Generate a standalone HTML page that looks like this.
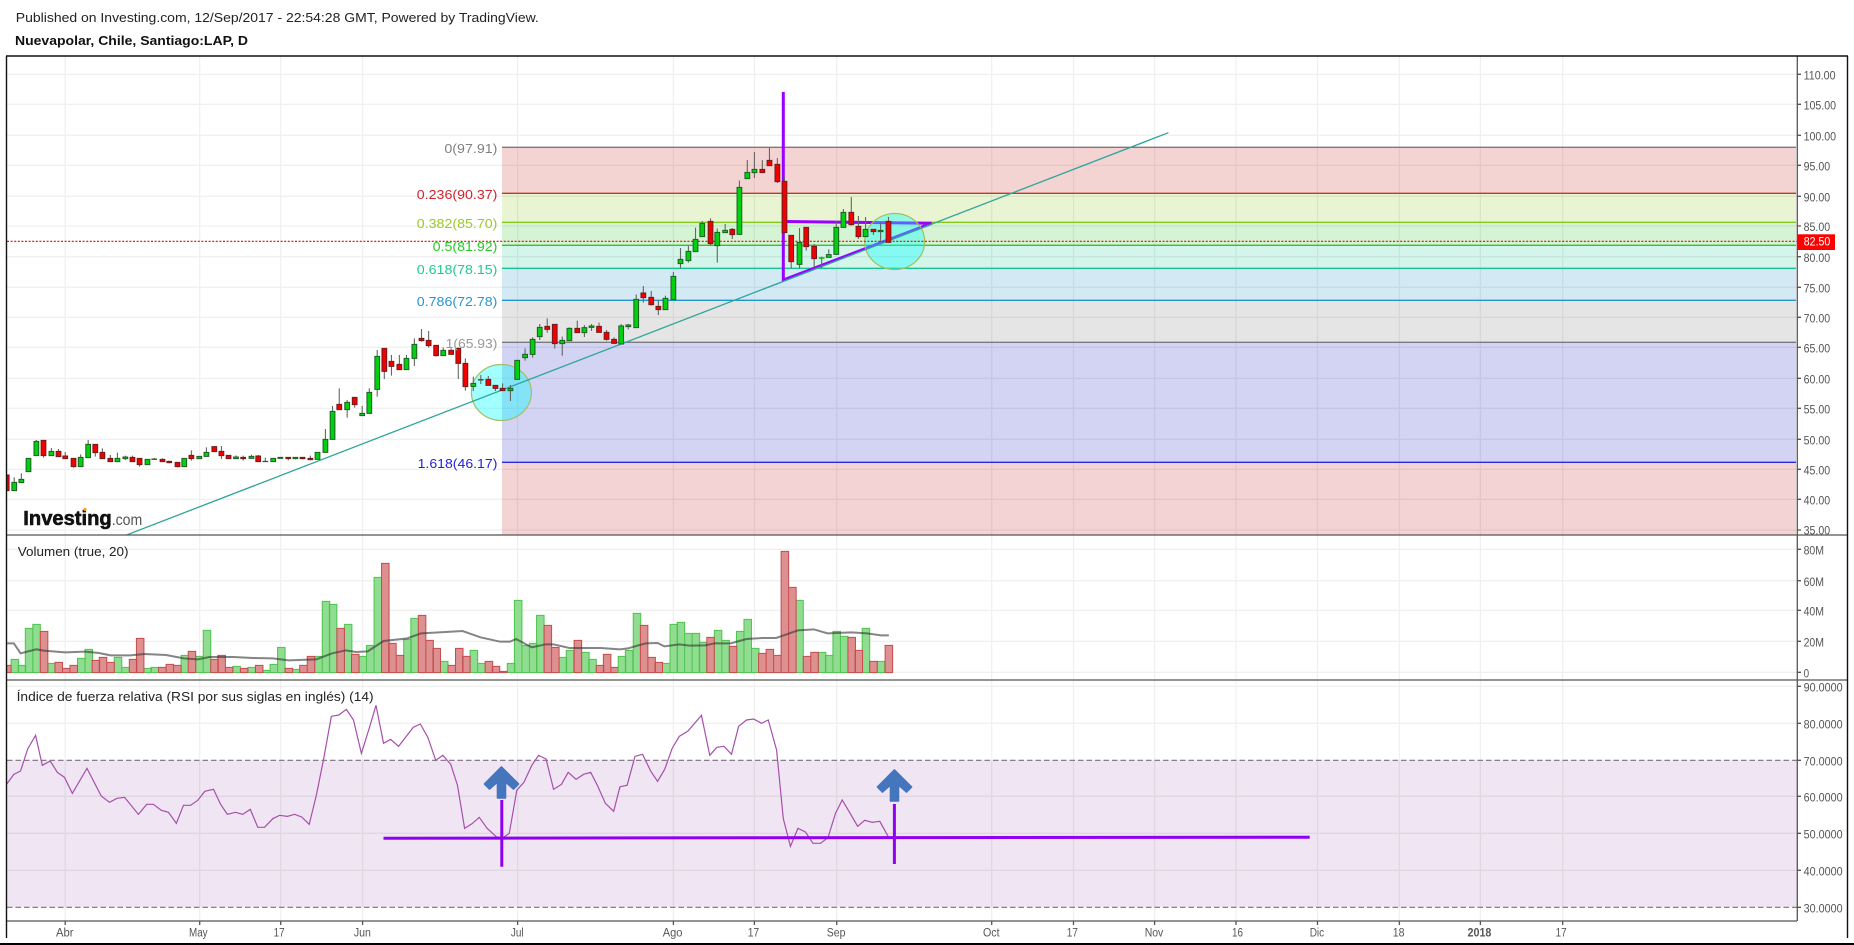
<!DOCTYPE html>
<html lang="es">
<head>
<meta charset="utf-8">
<title>Nuevapolar, Chile, Santiago:LAP, D</title>
<style>
html,body{margin:0;padding:0;background:#fff;width:1854px;height:945px;overflow:hidden}
svg{display:block;position:absolute;left:0;top:0}
text{font-family:"Liberation Sans",Arial,sans-serif}
.ax{font-size:11.5px;fill:#555}
.fib{font-size:12.8px}
.ns *{vector-effect:non-scaling-stroke}
</style>
</head>
<body>
<svg width="1854" height="945" viewBox="0 0 1854 945" xmlns="http://www.w3.org/2000/svg">
<rect width="1854" height="945" fill="#fff"/>

<!-- RSI band -->
<rect x="7" y="760.3" width="1790" height="147" fill="#f0e5f2"/>

<!-- Fib fills -->
<rect x="502" y="147.3" width="1294" height="46" fill="#f3d4d3"/>
<rect x="502" y="193.3" width="1294" height="29" fill="#e9f4d3"/>
<rect x="502" y="222.3" width="1294" height="23" fill="#d4f4d4"/>
<rect x="502" y="245.3" width="1294" height="23" fill="#d3f5ea"/>
<rect x="502" y="268.3" width="1294" height="32" fill="#d3e9f4"/>
<rect x="502" y="300.3" width="1294" height="42" fill="#e5e5e5"/>
<rect x="502" y="342.3" width="1294" height="120" fill="#d3d3f3"/>
<rect x="502" y="462.3" width="1294" height="73" fill="#f3d3d3"/>

<!-- Grid -->
<path fill="none" stroke="#000" stroke-opacity=".06" stroke-width="1.3" d="M7 74.3H1797M7 104.3H1797M7 135.3H1797M7 165.3H1797M7 196.3H1797M7 226H1797M7 256.7H1797M7 287.3H1797M7 317.3H1797M7 347.3H1797M7 378.3H1797M7 408.3H1797M7 439.3H1797M7 469.3H1797M7 499.3H1797M7 530H1797M7 549.3H1797M7 580.7H1797M7 610.3H1797M7 641.3H1797M7 672.3H1797M7 686.3H1797M7 723.3H1797M7 796.3H1797M7 833.3H1797M7 870.3H1797M65.2 56V921M199.7 56V921M280.7 56V921M362.6 56V921M517.6 56V921M673.4 56V921M754.4 56V921M836.7 56V921M991.7 56V921M1073.5 56V921M1154.6 56V921M1236 56V921M1317.5 56V921M1399.4 56V921M1480.4 56V921M1562.7 56V921"/>

<!-- Fib lines -->
<g stroke-width="1.3" fill="none">
<path d="M502 147.3H1796" stroke="#7f7777"/>
<path d="M502 193.3H1796" stroke="#c0392b"/>
<path d="M502 222.3H1796" stroke="#85c81f"/>
<path d="M502 245.3H1796" stroke="#2ec62e"/>
<path d="M502 268.3H1796" stroke="#17c48f"/>
<path d="M502 300.3H1796" stroke="#2196cb"/>
<path d="M502 342.3H1796" stroke="#7a7a82"/>
<path d="M502 462.3H1796" stroke="#2a2adf"/>
</g>

<!-- Purple triangle -->
<path d="M783.3 92V280L931.6 223.3L785 221.5" fill="none" stroke="#9900ff" stroke-width="3"/>

<!-- Circles -->
<ellipse cx="501.4" cy="392.5" rx="30" ry="28" fill="#00ffff" fill-opacity=".37" stroke="#a3bf62" stroke-width="1.2"/>
<ellipse cx="894.7" cy="241.5" rx="30" ry="28" fill="#00ffff" fill-opacity=".37" stroke="#a3bf62" stroke-width="1.2"/>

<!-- Trend line -->
<path d="M126.5 535L1168.4 132.7" stroke="#2fa59a" stroke-width="1.3" fill="none"/>

<!-- Last price line -->
<path d="M7 241.3H1797" stroke="#f00000" stroke-width="1.2" stroke-dasharray="2 1.6" fill="none"/>

<!-- Candles: first segment -->
<g class="ns" transform="translate(0,320) scale(.3954,.33333)">
<path fill="none" stroke="#666" stroke-width="1.1" d="M36 472V512M54 460V488M92 360V407M110 361V413M130 384V407M148 387V410M165 396V416M186 415V443M204 403V440M223 360V413M241 373V410M259 385V416M279 405V425M297 398V425M317 407V420M335 407V425M353 415V440M373 418V434M390 414V420M411 415V425M428 422V430M449 427V442M466 415V440M484 391V422M504 409V416M522 382V409M542 380V395M560 378V417M578 406V416M597 406V416M615 407V422M636 404V415M653 405V425M671 413V425M691 415V425M709 412V415M729 412V421M747 412V418M765 412V418M785 407V421M803 397V418M823 327V397M841 258V358M858 205V269M878 240V293M897 232V263M916 258V287M934 205V280M954 90V230M972 85V177M990 105V167M1010 105V149M1028 105V149M1048 55V138M1066 27V65M1084 33V83M1103 76V110M1121 82V107M1141 85V103M1159 82V177M1177 115V212M1197 170V213M1216 165V192M1235 168V196M1253 196V213M1271 190V212M1291 195V243M1308 121V178M1328 85V122M1347 52V113M1365 12V60M1384 -5V38M1403 13V86M1422 50V107M1440 22V62M1460 2V38M1478 15V51M1496 12V33M1515 8V37M1534 30V62M1553 52V70"/>
<path fill="#00d010" stroke="#1d5f22" stroke-width="1" d="M30 487h12V512h-12zM48 478h12V488h-12zM66 415h12V455h-12zM86 364h12V407h-12zM124 394h12V407h-12zM198 412h12V440h-12zM217 373h12V413h-12zM291 415h12V425h-12zM311 411h12V416h-12zM367 418h12V434h-12zM384 417h12V418h-12zM460 415h12V440h-12zM498 409h12V416h-12zM516 397h12V409h-12zM591 411h12V416h-12zM630 409h12V415h-12zM665 424h12V425h-12zM685 415h12V425h-12zM703 412h12V415h-12zM741 412h12V416h-12zM797 397h12V418h-12zM817 358h12V397h-12zM835 274h12V358h-12zM872 247h12V269h-12zM910 280h12V287h-12zM928 217h12V280h-12zM948 109h12V208h-12zM1022 115h12V149h-12zM1042 73h12V115h-12zM1115 91h12V107h-12zM1191 190h12V199h-12zM1210 179h12V180h-12zM1285 205h12V212h-12zM1302 121h12V178h-12zM1322 103h12V113h-12zM1341 58h12V103h-12zM1359 22h12V50h-12zM1416 61h12V71h-12zM1434 25h12V62h-12zM1472 23h12V38h-12zM1490 18h12V22h-12z"/>
<path fill="#f00000" stroke="#701c1c" stroke-width="1" d="M17 465h6V512h-6zM104 361h12V407h-12zM142 394h12V410h-12zM159 408h12V416h-12zM180 415h12V440h-12zM235 373h12V398h-12zM253 397h12V416h-12zM273 415h12V425h-12zM329 412h12V425h-12zM347 415h12V434h-12zM405 418h12V425h-12zM422 424h12V428h-12zM443 427h12V440h-12zM478 406h12V416h-12zM536 380h12V395h-12zM554 394h12V407h-12zM572 406h12V416h-12zM609 412h12V416h-12zM647 408h12V425h-12zM723 412h12V416h-12zM759 412h12V416h-12zM779 415h12V419h-12zM852 253h12V269h-12zM891 232h12V254h-12zM966 85h12V154h-12zM984 124h12V139h-12zM1004 133h12V149h-12zM1060 55h12V62h-12zM1078 61h12V77h-12zM1097 76h12V107h-12zM1135 91h12V103h-12zM1153 85h12V130h-12zM1171 130h12V200h-12zM1229 178h12V196h-12zM1247 196h12V205h-12zM1265 205h12V212h-12zM1378 19h12V28h-12zM1397 13h12V71h-12zM1454 25h12V38h-12zM1509 19h12V37h-12zM1528 37h12V58h-12zM1547 58h12V70h-12z"/>
</g>

<!-- Candles: second segment -->
<g class="ns" transform="translate(620,60) scale(.3954,.33333)">
<path fill="none" stroke="#666" stroke-width="1.1" d="M3 792V852M21 792V808M41 703V803M59 678V728M79 693V737M97 722V765M115 707V749M135 636V719M153 564V625M173 558V608M191 503V575M208 483V530M229 475V556M246 505V608M266 492V518M284 504V537M302 362V523M322 300V356M340 276V354M360 300V338M378 264V317M398 294V369M416 350V518M433 526V625M454 504V625M471 502V572M491 552V622M510 590V625M528 568V592M547 483V583M565 447V502M585 411V497M603 468V537M621 471V530M641 508V525M659 488V545M679 471V547"/>
<path fill="#00d010" stroke="#1d5f22" stroke-width="1" d="M-3 798h12V852h-12zM15 795h12V800h-12zM35 718h12V803h-12zM109 715h12V749h-12zM129 649h12V719h-12zM147 598h12V611h-12zM167 574h12V602h-12zM185 538h12V575h-12zM202 490h12V530h-12zM240 517h12V557h-12zM260 511h12V518h-12zM296 382h12V523h-12zM316 337h12V356h-12zM334 328h12V338h-12zM448 547h12V613h-12zM522 584h12V592h-12zM541 502h12V583h-12zM559 457h12V502h-12zM615 508h12V530h-12zM653 511h12V515h-12z"/>
<path fill="#00d010" stroke="#10c020" stroke-width="1" d="M504 593h12V595h-12z"/>
<path fill="#f00000" stroke="#701c1c" stroke-width="1" d="M53 699h12V713h-12zM73 712h12V734h-12zM91 739h12V749h-12zM223 484h12V551h-12zM278 508h12V524h-12zM354 328h12V338h-12zM372 301h12V317h-12zM392 313h12V365h-12zM410 364h12V518h-12zM427 526h12V605h-12zM465 502h12V560h-12zM485 559h12V596h-12zM579 457h12V494h-12zM597 499h12V530h-12zM635 508h12V515h-12zM673 484h12V547h-12z"/>
</g>

<!-- Volume bars: first segment -->
<g class="ns" transform="translate(0,530) scale(.3954,.33333)">
<path fill="#90dc90" stroke="#4dc44d" stroke-width="1" d="M28 388h19V428h-19zM46 406h19V428h-19zM64 295h19V428h-19zM83 283h19V428h-19zM121 400h19V428h-19zM196 385h19V428h-19zM215 358h19V428h-19zM289 382h19V428h-19zM308 412h19V428h-19zM364 415h19V428h-19zM382 412h19V428h-19zM458 376h19V428h-19zM495 379h19V428h-19zM514 301h19V428h-19zM589 409h19V428h-19zM627 412h19V428h-19zM664 421h19V428h-19zM683 403h19V428h-19zM702 352h19V428h-19zM740 418h19V428h-19zM796 379h19V428h-19zM815 214h19V428h-19zM833 223h19V428h-19zM871 283h19V428h-19zM908 379h19V428h-19zM927 346h19V428h-19zM946 142h19V428h-19zM1021 328h19V428h-19zM1039 265h19V428h-19zM1114 394h19V428h-19zM1189 361h19V428h-19zM1208 400h19V428h-19zM1283 400h19V428h-19zM1301 211h19V428h-19zM1320 346h19V428h-19zM1339 340h19V428h-19zM1357 256h19V428h-19zM1414 382h19V428h-19zM1432 361h19V428h-19zM1471 367h19V428h-19zM1489 388h19V428h-19z"/>
<path fill="#de8f8f" stroke="#c44c4c" stroke-width="1" d="M17 406h11V428h-11zM102 304h19V428h-19zM139 397h19V428h-19zM158 415h19V428h-19zM177 406h19V428h-19zM233 391h19V428h-19zM251 382h19V428h-19zM270 397h19V428h-19zM327 388h19V428h-19zM345 325h19V428h-19zM401 412h19V428h-19zM420 403h19V428h-19zM439 406h19V428h-19zM476 364h19V428h-19zM533 388h19V428h-19zM551 376h19V428h-19zM570 412h19V428h-19zM608 415h19V428h-19zM646 406h19V428h-19zM721 415h19V428h-19zM758 406h19V428h-19zM777 379h19V428h-19zM852 295h19V428h-19zM889 373h19V428h-19zM965 100h19V428h-19zM983 340h19V428h-19zM1002 376h19V428h-19zM1058 256h19V428h-19zM1077 331h19V428h-19zM1095 355h19V428h-19zM1133 406h19V428h-19zM1152 355h19V428h-19zM1170 379h19V428h-19zM1227 394h19V428h-19zM1245 409h19V428h-19zM1263 424h19V428h-19zM1376 286h19V428h-19zM1395 352h19V428h-19zM1452 331h19V428h-19zM1508 406h19V428h-19zM1526 373h19V428h-19zM1545 412h19V428h-19z"/>
</g>
<!-- Volume bars: second segment -->
<g class="ns" transform="translate(620,530) scale(.3954,.33333)">
<path fill="#90dc90" stroke="#4dc44d" stroke-width="1" d="M-4.5 379h19V428h-19zM13.5 361h19V428h-19zM33.5 250h19V428h-19zM107.5 400h19V428h-19zM126.5 283h19V428h-19zM144.5 277h19V428h-19zM163.5 310h19V428h-19zM182.5 310h19V428h-19zM200.5 337h19V428h-19zM238.5 301h19V428h-19zM257.5 331h19V428h-19zM294.5 304h19V428h-19zM313.5 268h19V428h-19zM332.5 355h19V428h-19zM444.5 211h19V428h-19zM501.5 367h19V428h-19zM519.5 376h19V428h-19zM538.5 304h19V428h-19zM557.5 319h19V428h-19zM612.5 295h19V428h-19zM650.5 394h19V428h-19z"/>
<path fill="#de8f8f" stroke="#c44c4c" stroke-width="1" d="M51.5 286h19V428h-19zM70.5 382h19V428h-19zM88.5 397h19V428h-19zM219.5 322h19V428h-19zM276.5 349h19V428h-19zM350.5 370h19V428h-19zM369.5 358h19V428h-19zM388.5 376h19V428h-19zM407.5 64h19V428h-19zM426.5 172h19V428h-19zM463.5 379h19V428h-19zM482.5 367h19V428h-19zM576.5 322h19V428h-19zM594.5 361h19V428h-19zM631.5 394h19V428h-19zM670.5 346h19V428h-19z"/>
</g>

<!-- Volume MA -->
<g class="ns" fill="none" stroke="#333" stroke-opacity=".6" stroke-width="2">
<polyline transform="translate(0,530) scale(.3954,.33333)" points="18,340 35,340 52,370 92,358 110,362 165,367 215,365 250,369 280,376 330,376 365,372 420,375 465,385 500,388 530,381 590,381 640,384 690,385 730,391 800,388 840,370 875,361 900,366 930,364 970,333 1030,325 1065,310 1110,307 1170,303 1215,322 1265,335 1290,335 1305,327 1345,352 1380,343 1400,343 1440,354 1520,354 1568,358"/>
<polyline transform="translate(620,530) scale(.3954,.33333)" points="0,358 20,355 65,340 95,339 112,349 150,343 175,347 215,346 240,340 280,340 320,327 360,324 395,324 450,301 490,298 525,310 585,307 625,310 660,316 680,316"/>
</g>

<!-- RSI dashed levels -->
<path d="M7 760.3H1797M7 907.3H1797" stroke="#7c6f7e" stroke-width="1.2" stroke-dasharray="5.5 3" fill="none"/>

<!-- RSI line -->
<g class="ns" fill="none" stroke="#a650aa" stroke-width="1.2">
<polyline transform="translate(0,680) scale(.3954,.33333)" points="17,312 35,283 52,273 70,207 90,166 107,256 127,243 145,277 163,292 183,340 220,265 256,348 277,367 296,355 315,352 350,403 371,373 388,373 408,391 426,397 446,430 464,376 482,376 500,361 518,334 540,328 558,373 575,403 595,397 614,403 633,388 652,442 669,442 690,416 707,406 727,409 745,403 763,411 782,433 800,346 818,240 838,109 857,105 876,88 894,120 914,220 933,148 951,76 970,190 988,178 1008,199 1045,142 1063,132 1082,172 1102,241 1120,226 1140,253 1157,316 1175,445 1194,431 1212,412 1232,445 1255,470 1270,475 1288,460 1307,331 1325,307 1345,256 1362,226 1381,237 1400,328 1420,313 1437,277 1457,298 1476,283 1494,277 1512,319 1531,370 1552,394 1568,320"/>
<polyline transform="translate(620,680) scale(.3954,.33333)" points="0,320 18,316 38,229 57,223 78,274 95,304 113,268 132,205 150,169 172,153 206,106 227,226 245,202 263,199 282,223 300,139 320,120 338,117 358,130 375,120 396,210 413,416 431,499 450,445 469,456 488,490 507,490 526,473 545,400 562,360 582,400 601,439 619,421 638,427 657,424 678,469"/>
</g>

<!-- RSI annotation lines -->
<g stroke="#9000ee" stroke-width="3" fill="none">
<path d="M383.5 838.2L1309.7 837.2"/>
<path d="M501.8 800V866.7"/>
<path d="M894.4 804V864"/>
</g>

<!-- Blue arrows -->
<path d="M501.4 767L518.5 784L513.5 789L505.5 782V798H497.5V782L489.5 789L484.5 784Z" fill="#4575bd" stroke="#4575bd" stroke-width="1.6" stroke-linejoin="round"/>
<path d="M894.4 770L911.5 787L906.5 792L898.5 785V801H890.5V785L882.5 792L877.5 787Z" fill="#4575bd" stroke="#4575bd" stroke-width="1.6" stroke-linejoin="round"/>

<!-- Axes and frame -->
<g fill="none" stroke="#555" stroke-width="1.3">
<path d="M1797.3 56V921"/>
<path d="M6 535H1848M6 680H1848M6 921H1797"/>
<path d="M1797 74.3h4M1797 104.3h4M1797 135.3h4M1797 165.3h4M1797 196.3h4M1797 226h4M1797 256.7h4M1797 287.3h4M1797 317.3h4M1797 347.3h4M1797 378.3h4M1797 408.3h4M1797 439.3h4M1797 469.3h4M1797 499.3h4M1797 530h4M1797 549.3h4M1797 580.7h4M1797 610.3h4M1797 641.3h4M1797 672.3h4M1797 686.3h4M1797 723.3h4M1797 760.3h4M1797 796.3h4M1797 833.3h4M1797 870.3h4M1797 907.3h4"/>
<path d="M65.2 921v4M199.7 921v4M280.7 921v4M362.6 921v4M517.6 921v4M673.4 921v4M754.4 921v4M836.7 921v4M991.7 921v4M1073.5 921v4M1154.6 921v4M1236 921v4M1317.5 921v4M1399.4 921v4M1480.4 921v4M1562.7 921v4"/>
</g>
<g fill="none" stroke="#111" stroke-width="1.4">
<path d="M6.5 56V938M1847.5 56V938M6 56H1848"/>
</g>
<rect x="0" y="943" width="1854" height="2" fill="#000"/>

<!-- Header text -->
<text x="15.8" y="22" font-size="13" fill="#222" textLength="523" lengthAdjust="spacingAndGlyphs">Published on Investing.com, 12/Sep/2017 - 22:54:28 GMT, Powered by TradingView.</text>
<text x="15" y="45" font-size="13" font-weight="bold" fill="#111" textLength="233" lengthAdjust="spacingAndGlyphs">Nuevapolar, Chile, Santiago:LAP, D</text>

<!-- Fib labels -->
<g class="fib">
<text x="444.4" y="153" fill="#808080" textLength="53" lengthAdjust="spacingAndGlyphs">0(97.91)</text>
<text x="416.8" y="199.2" fill="#d0232b" textLength="80.6" lengthAdjust="spacingAndGlyphs">0.236(90.37)</text>
<text x="416.8" y="228" fill="#9ac92a" textLength="80.6" lengthAdjust="spacingAndGlyphs">0.382(85.70)</text>
<text x="432.6" y="251" fill="#22cc22" textLength="64.8" lengthAdjust="spacingAndGlyphs">0.5(81.92)</text>
<text x="416.8" y="274" fill="#1fc991" textLength="80.6" lengthAdjust="spacingAndGlyphs">0.618(78.15)</text>
<text x="416.8" y="306" fill="#2a95cf" textLength="80.6" lengthAdjust="spacingAndGlyphs">0.786(72.78)</text>
<text x="445.6" y="348" fill="#999" textLength="51.8" lengthAdjust="spacingAndGlyphs">1(65.93)</text>
<text x="417.6" y="468" fill="#2222dd" textLength="79.8" lengthAdjust="spacingAndGlyphs">1.618(46.17)</text>
</g>

<!-- Logo -->
<text x="23.3" y="525" font-size="20" font-weight="bold" fill="#111" stroke="#111" stroke-width=".6" textLength="88.4" lengthAdjust="spacingAndGlyphs">Investing</text>
<circle cx="85" cy="509.5" r="1.6" fill="#f59a12"/>
<text x="111.7" y="525" font-size="16" fill="#555" textLength="30.6" lengthAdjust="spacingAndGlyphs">.com</text>

<!-- Pane titles -->
<text x="17.8" y="556" font-size="13" fill="#222" textLength="110.7" lengthAdjust="spacingAndGlyphs">Volumen (true, 20)</text>
<text x="16.6" y="701" font-size="13" fill="#222" textLength="357" lengthAdjust="spacingAndGlyphs">Índice de fuerza relativa (RSI por sus siglas en inglés) (14)</text>

<!-- Price axis labels -->
<g class="ax">
<text x="1803.6" y="79.5" textLength="32" lengthAdjust="spacingAndGlyphs">110.00</text>
<text x="1803.6" y="109.5" textLength="32.5" lengthAdjust="spacingAndGlyphs">105.00</text>
<text x="1803.6" y="140.5" textLength="32.5" lengthAdjust="spacingAndGlyphs">100.00</text>
<text x="1803.6" y="170.5" textLength="26.5" lengthAdjust="spacingAndGlyphs">95.00</text>
<text x="1803.6" y="201.5" textLength="26.5" lengthAdjust="spacingAndGlyphs">90.00</text>
<text x="1803.6" y="231.2" textLength="26.5" lengthAdjust="spacingAndGlyphs">85.00</text>
<text x="1803.6" y="262" textLength="26.5" lengthAdjust="spacingAndGlyphs">80.00</text>
<text x="1803.6" y="292.5" textLength="26.5" lengthAdjust="spacingAndGlyphs">75.00</text>
<text x="1803.6" y="322.5" textLength="26.5" lengthAdjust="spacingAndGlyphs">70.00</text>
<text x="1803.6" y="352.5" textLength="26.5" lengthAdjust="spacingAndGlyphs">65.00</text>
<text x="1803.6" y="383.5" textLength="26.5" lengthAdjust="spacingAndGlyphs">60.00</text>
<text x="1803.6" y="413.5" textLength="26.5" lengthAdjust="spacingAndGlyphs">55.00</text>
<text x="1803.6" y="444.5" textLength="26.5" lengthAdjust="spacingAndGlyphs">50.00</text>
<text x="1803.6" y="474.5" textLength="26.5" lengthAdjust="spacingAndGlyphs">45.00</text>
<text x="1803.6" y="504.5" textLength="26.5" lengthAdjust="spacingAndGlyphs">40.00</text>
<text x="1803.6" y="534.3" textLength="26.5" lengthAdjust="spacingAndGlyphs">35.00</text>

<text x="1803.6" y="554.5" textLength="20.4" lengthAdjust="spacingAndGlyphs">80M</text>
<text x="1803.6" y="586" textLength="20.4" lengthAdjust="spacingAndGlyphs">60M</text>
<text x="1803.6" y="615.5" textLength="20.4" lengthAdjust="spacingAndGlyphs">40M</text>
<text x="1803.6" y="646.5" textLength="20.4" lengthAdjust="spacingAndGlyphs">20M</text>
<text x="1803.6" y="677.5" textLength="5.5" lengthAdjust="spacingAndGlyphs">0</text>

<text x="1803.6" y="691.5" textLength="39" lengthAdjust="spacingAndGlyphs">90.0000</text>
<text x="1803.6" y="728.5" textLength="39" lengthAdjust="spacingAndGlyphs">80.0000</text>
<text x="1803.6" y="765.5" textLength="39" lengthAdjust="spacingAndGlyphs">70.0000</text>
<text x="1803.6" y="801.5" textLength="39" lengthAdjust="spacingAndGlyphs">60.0000</text>
<text x="1803.6" y="838.5" textLength="39" lengthAdjust="spacingAndGlyphs">50.0000</text>
<text x="1803.6" y="875.5" textLength="39" lengthAdjust="spacingAndGlyphs">40.0000</text>
<text x="1803.6" y="912.5" textLength="39" lengthAdjust="spacingAndGlyphs">30.0000</text>

<!-- Time axis labels -->
<text x="56" y="936.5" textLength="17.5" lengthAdjust="spacingAndGlyphs">Abr</text>
<text x="189" y="936.5" textLength="18.6" lengthAdjust="spacingAndGlyphs">May</text>
<text x="273.6" y="936.5" textLength="11" lengthAdjust="spacingAndGlyphs">17</text>
<text x="353.9" y="936.5" textLength="17" lengthAdjust="spacingAndGlyphs">Jun</text>
<text x="510.9" y="936.5" textLength="12.7" lengthAdjust="spacingAndGlyphs">Jul</text>
<text x="662.7" y="936.5" textLength="19.8" lengthAdjust="spacingAndGlyphs">Ago</text>
<text x="747.7" y="936.5" textLength="11.5" lengthAdjust="spacingAndGlyphs">17</text>
<text x="826.8" y="936.5" textLength="18.6" lengthAdjust="spacingAndGlyphs">Sep</text>
<text x="983" y="936.5" textLength="16.6" lengthAdjust="spacingAndGlyphs">Oct</text>
<text x="1066.8" y="936.5" textLength="11.1" lengthAdjust="spacingAndGlyphs">17</text>
<text x="1144.7" y="936.5" textLength="18.6" lengthAdjust="spacingAndGlyphs">Nov</text>
<text x="1232" y="936.5" textLength="11" lengthAdjust="spacingAndGlyphs">16</text>
<text x="1309.7" y="936.5" textLength="14.5" lengthAdjust="spacingAndGlyphs">Dic</text>
<text x="1392.7" y="936.5" textLength="11.8" lengthAdjust="spacingAndGlyphs">18</text>
<text x="1467.5" y="936.5" font-weight="bold" textLength="23.9" lengthAdjust="spacingAndGlyphs">2018</text>
<text x="1555.6" y="936.5" textLength="11" lengthAdjust="spacingAndGlyphs">17</text>
</g>

<!-- Last price label -->
<rect x="1797.3" y="234.3" width="37.7" height="15.7" fill="#ff0000"/>
<text x="1803.8" y="245.6" font-size="11.5" fill="#fff" textLength="26.5" lengthAdjust="spacingAndGlyphs">82.50</text>
</svg>
</body>
</html>
